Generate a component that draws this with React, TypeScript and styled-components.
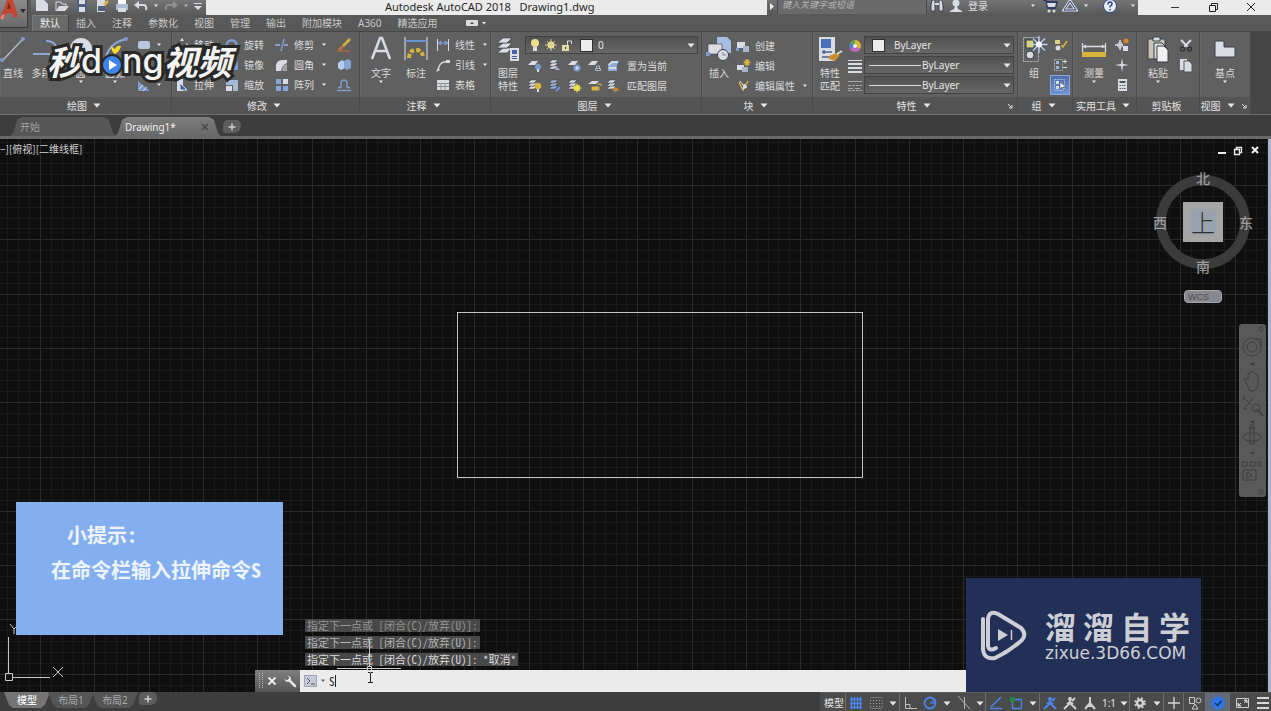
import React from "react";
import styled, { createGlobalStyle, css } from "styled-components";

const UI = `"Noto Sans", "Noto Sans CJK SC", sans-serif`;
const CJK = `"Noto Sans CJK SC", sans-serif`;
const MONO = `"Noto Sans Mono CJK SC", "Liberation Mono", "Noto Sans CJK SC", monospace`;

const GlobalStyle = createGlobalStyle`
  * { box-sizing: border-box; }
  html, body { margin: 0; background: #111; }
  body { font: 10px/14px ${UI}; color: #dcdcdc; }
  button, input, select { font: inherit; color: inherit; margin: 0; padding: 0; border: 0; background: none; outline: none; }
  svg { display: block; flex: none; }
`;

const Page = styled.div`
  display: flex;
  flex-direction: column;
  height: 100vh;
  min-width: 0;
  overflow: hidden;
`;

/* ---------- header ---------- */

const Header = styled.header`
  display: grid;
  grid-template-columns: 31px 1fr;
  grid-template-rows: 15px 16px;
  background: #595959;
  border-bottom: 1px solid #474747;
`;

const AppButton = styled.button`
  grid-row: 1 / 3;
  width: 28px;
  height: 28px;
  display: flex;
  align-items: flex-start;
  background: linear-gradient(#8b8b8b, #6a6a6a);
  border-right: 1px solid #3a3a3a;
  border-bottom: 1px solid #3a3a3a;
`;

const TitleBar = styled.div`
  display: flex;
  align-items: stretch;
  background: linear-gradient(#757575, #585858);
`;

const QuickBar = styled.div`
  display: flex;
  align-items: center;
  width: 175px;
  padding: 0 2px 4px 1px;
`;

const IconButton = styled.button<{ $w?: number }>`
  width: ${(p) => p.$w ?? 20}px;
  height: 14px;
  display: flex;
  flex: none;
  align-items: center;
  justify-content: center;
`;

const Title = styled.div`
  flex: 1;
  padding-left: 179px;
  background: #ebebeb;
  color: #262626;
  font-size: 11px;
  line-height: 13px;
  white-space: pre;
`;

const Search = styled.input`
  width: 150px;
  height: 14px;
  padding: 0 4px 4px;
  background: #6a6a6a;
  border: solid #474747;
  border-width: 0 1px;
  font-size: 9px;
  font-style: italic;
  &::placeholder { color: #b4b4b4; opacity: 1; }
`;

const Account = styled.div`
  display: flex;
  align-items: center;
  width: 211px;
  padding-bottom: 4px;
`;

const LoginButton = styled.button`
  display: flex;
  flex: 1;
  align-items: center;
  gap: 3px;
  height: 14px;
`;

const WindowButtons = styled.div`
  display: flex;
  width: 133px;
  padding: 0 0 4px 18px;
  background: #ebebeb;
  color: #222;
`;

const TabRow = styled.nav`
  display: flex;
  align-items: stretch;
  padding-left: 1px;
`;

const RibbonTab = styled.button<{ $active?: boolean }>`
  padding: 0 8px;
  line-height: 17px;
  color: ${(p) => (p.$active ? "#efefef" : "#c8c8c8")};
  ${(p) => p.$active && css`background: #6a6a6a; box-shadow: inset 1px 1px 0 #7b7b7b, 1px 0 0 #454545;`}
`;

/* ---------- ribbon ---------- */

const Ribbon = styled.section`
  display: flex;
  height: 83px;
  flex: none;
  background: #454545;
  border-bottom: 1px solid #6d6d6d;
`;

const PanelBox = styled.section<{ $w: number }>`
  display: flex;
  flex-direction: column;
  flex: none;
  width: ${(p) => p.$w}px;
  background: #606060;
  border-right: 1px solid #4a4a4a;
  box-shadow: inset 1px 0 0 #686868;
`;

const PanelBody = styled.div<{ $pad?: number }>`
  display: flex;
  flex: 1;
  padding: 3px 0 0 ${(p) => p.$pad ?? 0}px;
`;

const PanelFoot = styled.button`
  display: flex;
  align-items: center;
  justify-content: center;
  gap: 6px;
  height: 17px;
  padding-right: 3px;
  background: #545454;
  color: #e2e2e2;
`;

const Big = styled.button<{ $w: number }>`
  width: ${(p) => p.$w}px;
  height: 62px;
  display: flex;
  flex: none;
  flex-direction: column;
  align-items: center;
  line-height: 13px;
  > svg:first-child { margin-bottom: 4px; }
  > span { white-space: nowrap; }
`;

const Column = styled.div<{ $w?: number; $low?: boolean }>`
  display: flex;
  flex-direction: column;
  flex: none;
  ${(p) => p.$w && css`width: ${p.$w}px;`}
  ${(p) => p.$low && css`padding-top: 1px;`}
`;

const Line = styled.div`
  display: flex;
  align-items: center;
  height: 20px;
`;

const ToolButton = styled.button`
  display: flex;
  align-items: center;
  gap: 4px;
  height: 20px;
  white-space: nowrap;
`;

const SmallTool = styled.button<{ $on?: boolean; $w?: number }>`
  display: flex;
  align-items: center;
  justify-content: center;
  width: ${(p) => p.$w ?? 20}px;
  height: 20px;
  ${(p) => p.$on && css`background: linear-gradient(#4e6ea8, #6f93d6); border: 1px solid #8aa9e0;`}
`;

const Combo = styled.label`
  display: flex;
  align-items: center;
  gap: 5px;
  height: 18px;
  margin-bottom: 2px;
  padding: 0 2px 0 4px;
  background: linear-gradient(#515151, #676767);
  border: 1px solid #434343;
  color: #e4e4e4;
`;

const Select = styled.select<{ $gap?: number }>`
  flex: 1;
  min-width: 0;
  height: 16px;
  padding-left: ${(p) => p.$gap ?? 0}px;
  appearance: none;
  line-height: 16px;
`;

const Swatch = styled.span`
  width: 13px;
  height: 13px;
  margin-left: 3px;
  background: #ececec;
  border: 1px solid #2e2e2e;
`;

const Stroke = styled.span<{ $w: number }>`
  width: ${(p) => p.$w}px;
  height: 1px;
  margin-right: -4px;
  background: #dedede;
`;

/* ---------- document tabs ---------- */

const DocTabs = styled.nav`
  display: flex;
  align-items: flex-end;
  flex: none;
  height: 24px;
  padding: 0 0 0 10px;
  background: #3d3d3d;
  border-bottom: 3px solid #686868;
`;

const DocTab = styled.button<{ $active?: boolean }>`
  display: flex;
  align-items: center;
  justify-content: space-between;
  width: 106px;
  height: 19px;
  margin-right: -1px;
  padding: 0 12px 0 10px;
  background: ${(p) => (p.$active ? "linear-gradient(#7c7c7c, #686868)" : "#565656")};
  color: ${(p) => (p.$active ? "#f0f0f0" : "#a2a2a2")};
  clip-path: polygon(0 100%, 3px 85%, 7px 15%, 12px 0, calc(100% - 12px) 0, calc(100% - 7px) 15%, calc(100% - 3px) 85%, 100% 100%);
`;

const AddTab = styled.button`
  display: flex;
  align-items: center;
  justify-content: center;
  width: 18px;
  height: 13px;
  margin: 0 0 3px 3px;
  border-radius: 5px 5px 7px 3px;
  background: #5d5d5d;
`;

/* ---------- drawing area ---------- */

const Canvas = styled.main`
  position: relative;
  flex: 1;
  min-height: 0;
  overflow: hidden;
  background: #0f0f10;
  border-right: 3px solid #aab2d0;
`;

const Sheet = styled.svg`
  position: absolute;
  inset: 0;
  width: 100%;
  height: 100%;
  pointer-events: none;
`;

const ViewLabel = styled.div`
  position: absolute;
  left: 0;
  top: 3px;
  font-family: ${CJK};
  color: #d2d2d2;
`;

const ViewButtons = styled.div`
  position: absolute;
  right: 4px;
  top: 5px;
  display: flex;
`;

const Compass = styled.div`
  position: absolute;
  right: 11px;
  top: 29px;
  width: 108px;
  height: 108px;
  display: grid;
  grid-template: 20px 68px 20px / 22px 64px 22px;
  place-items: center;
  font: 500 14px/20px ${CJK};
  color: #9b9b9b;
`;

const Ring = styled.div`
  position: absolute;
  left: 7px;
  top: 7px;
  width: 94px;
  height: 94px;
  border: 10px solid #3b3b3b;
  border-radius: 50%;
`;

const Face = styled.span<{ $area: string }>`
  position: relative;
  grid-area: ${(p) => p.$area};
`;

const Cube = styled.button`
  grid-area: 2 / 2;
  width: 40px;
  height: 40px;
  border: 7px solid #a5a5a3;
  background: #9aa2ad;
  color: #303030;
  font: 300 24px/24px ${CJK};
`;

const Wcs = styled.button`
  position: absolute;
  right: 46px;
  top: 151px;
  width: 38px;
  height: 13px;
  padding-left: 3px;
  border-radius: 4px;
  border: 1px solid #a9aab0;
  background: #88898f;
  color: #4c4d54;
  font: 9px/10px "Liberation Sans", sans-serif;
  text-align: left;
`;

const NavBar = styled.div`
  position: absolute;
  right: 2px;
  top: 185px;
  width: 27px;
  height: 173px;
  border-radius: 3px;
  background: #595959;
`;

const Tip = styled.aside`
  position: absolute;
  left: 16px;
  bottom: 57px;
  width: 267px;
  height: 133px;
  padding: 15px 0 0 35px;
  background: #83aff0;
  color: #eef4fd;
  font: 700 20px/35px ${MONO};
  p { margin: 0; }
  p:first-child { padding-left: 16px; }
`;

const History = styled.ol`
  position: absolute;
  left: 305px;
  bottom: 26px;
  margin: 0;
  padding: 0;
  list-style: none;
  display: flex;
  flex-direction: column;
  align-items: flex-start;
  gap: 4px;
  font: 11px/13px ${MONO};
  white-space: pre;
`;

const HistoryItem = styled.li<{ $tone: string }>`
  height: 13px;
  padding: 0 2px;
  background: #484848;
  color: ${(p) => p.$tone};
`;

const CommandBar = styled.div`
  position: absolute;
  left: 255px;
  right: 71px;
  bottom: 0;
  display: flex;
  height: 22px;
  background: #ebebeb;
`;

const CommandGrip = styled.div`
  display: flex;
  align-items: center;
  width: 45px;
  padding-left: 3px;
  background: linear-gradient(#7f7f7f, #555);
`;

const Prompt = styled.label`
  display: flex;
  align-items: center;
  gap: 3px;
  padding-left: 4px;
  color: #222;
  font: 11px/16px ${MONO};
`;

const CommandInput = styled.input`
  width: 6px;
`;

const Caret = styled.span`
  width: 1px;
  height: 12px;
  margin-left: -3px;
  background: #222;
`;

const Brand = styled.aside`
  position: absolute;
  right: 67px;
  bottom: 0;
  width: 235px;
  height: 114px;
  display: flex;
  align-items: center;
  gap: 17px;
  padding: 2px 0 0 14px;
  background: #222f57;
  color: #cdcfd4;
`;

const BrandName = styled.div`
  display: flex;
  gap: 7px;
  font: 700 31px/34px ${CJK};
`;

const BrandUrl = styled.div`
  font: 17px/20px "DejaVu Sans", sans-serif;
`;

const VideoMark = styled.div`
  position: absolute;
  left: 47px;
  top: 36px;
  z-index: 2;
  display: flex;
  align-items: center;
  height: 50px;
  color: #f4f4f4;
  -webkit-text-stroke: 6px #282828;
  paint-order: stroke fill;
`;

const MarkCjk = styled.span`
  font: italic 700 34px/50px ${CJK};
`;

const MarkLatin = styled.span`
  font: 500 34px/50px Inter, sans-serif;
`;

/* ---------- status bar ---------- */

const StatusBar = styled.footer`
  display: flex;
  flex: none;
  height: 19px;
  padding-left: 4px;
  background: #3e3e3e;
`;

const LayoutTab = styled.button<{ $active?: boolean }>`
  height: 16px;
  width: 46px;
  margin-right: -2px;
  line-height: 16px;
  color: ${(p) => (p.$active ? "#f2f2f2" : "#a9a9a9")};
  font-weight: ${(p) => (p.$active ? 500 : 400)};
  background: ${(p) => (p.$active ? "#757575" : "#555")};
  clip-path: polygon(0 0, 100% 0, calc(100% - 5px) 80%, calc(100% - 9px) 100%, 9px 100%, 5px 80%);
`;

const StatusTools = styled.div`
  display: flex;
  margin-left: auto;
  padding-left: 2px;
  background: #4b4b4b;
  border-top: 1px solid #5f5f5f;
`;

const StatusItem = styled.button<{ $w?: number; $on?: boolean; $sep?: boolean }>`
  display: flex;
  align-items: center;
  justify-content: center;
  width: ${(p) => p.$w ?? 20}px;
  padding-top: 2px;
  color: #e6e6e6;
  white-space: nowrap;
  background: ${(p) => (p.$on ? "#5f6a7c" : "transparent")};
  ${(p) => p.$sep && css`box-shadow: inset -1px 0 0 #6e6e6e;`}
`;

/* ---------- drawings ---------- */

type G = { w?: number; h?: number; children: React.ReactNode };
const Svg = ({ w = 16, h = 16, children }: G) => (
  <svg width={w} height={h} viewBox={`0 0 ${w} ${h}`} fill="none" aria-hidden="true">{children}</svg>
);

const Down = ({ small, color = "#e8e8e8" }: { small?: boolean; color?: string }) =>
  small ? (
    <Svg w={6} h={4}><path d="M1 0.500h4L3 3z" fill={color} /></Svg>
  ) : (
    <Svg w={8} h={5}><path d="M0.500 0.500h7L4 4.500z" fill={color} /></Svg>
  );

const L = "#d9dde3";
const B = "#7c9cd0";
const Y = "#dab53c";
const D = "#3a3f48";

const Stack = ({ x = 0, y = 0, c = L }: { x?: number; y?: number; c?: string }) => (
  <g transform={`translate(${x} ${y})`} stroke={D} strokeWidth=".5" fill={c}>
    <path d="M0 10l3-3h6l-3 3z" /><path d="M0 7l3-3h6L6 7z" /><path d="M0 4l3-3h6L6 4z" />
  </g>
);

const LayerIcon = ({ kind }: { kind: number }) => (
  <Svg>
    {kind === 0 && <><path d="M1 7l4-4h6L8 7z" fill={L} /><circle cx="11" cy="9" r="3" fill={B} /><path d="M10 11h2v3h-2z" fill={L} /></>}
    {kind === 1 && <><Stack x={2} y={1} /><path d="M10 9l-2 3h5z" fill="#a7b9d8" /></>}
    {kind === 2 && <><path d="M1 7l4-4h6L8 7z" fill={L} /><circle cx="10" cy="10" r="3.500" fill={B} /><circle cx="10" cy="10" r="1.500" fill={L} /></>}
    {kind === 3 && <><path d="M1 7l4-4h6L8 7z" fill={L} /><path d="M9.500 10V8h3v2M8.500 10.500h5v2h-5z" stroke="#b0b6c0" /></>}
    {kind === 4 && <><path d="M3 6l4-3h7l-2 4v6H3z" fill="#8fa9d3" /><path d="M4 7l3-3h6M4 10h7" stroke="#e8edf6" strokeWidth="1.300" /></>}
    {kind === 5 && <><Stack x={1} y={1} /><circle cx="11" cy="8" r="3.200" fill={Y} /><path d="M10 11h2v3h-2z" fill={L} /></>}
    {kind === 6 && <><Stack x={2} y={1} c="#9db1d4" /><path d="M9 13l4-4" stroke="#6c91d8" strokeWidth="2" /></>}
    {kind === 7 && <><Stack x={1} y={1} /><circle cx="10" cy="10" r="3" fill="#efe04a" /><path d="M10 5.500v9M5.500 10h9M7 7l6 6M13 7l-6 6" stroke="#efe04a" /></>}
    {kind === 8 && <><path d="M1 6l4-3h7L9 6z" fill={L} /><path d="M11 7v-1h3v2M5 9h7v3H5z" stroke={Y} /><path d="M5 9h6v3H5z" fill={Y} /></>}
    {kind === 9 && <><Stack x={2} y={1} /><path d="M7 11l4-2 3 3-4 2z" fill="#c9843c" /></>}
  </Svg>
);

const modify: Record<string, React.ReactNode> = {
  移动: <path d="M8 1l2 3H6zM8 15l2-3H6zM1 8l3-2v4zM15 8l-3-2v4z" fill={L} />,
  拷贝: <><circle cx="6" cy="6" r="3.500" stroke={L} /><circle cx="10" cy="10" r="3.500" stroke={B} strokeWidth="1.500" /></>,
  拉伸: <><path d="M3 2h6v12H3z" fill={L} /><path d="M6 13V6l7 7z" fill="#3f5f9c" stroke="#d7e1f2" /></>,
  旋转: <path d="M3 10a5 5 0 1 1 8 2" stroke={B} strokeWidth="2.500" />,
  镜像: <><path d="M2 13V4l5 9z" fill={L} /><path d="M14 13V4l-5 9z" fill={B} /></>,
  缩放: <><path d="M2 3h12v11H9V8H2z" fill="#a7b9d8" /><path d="M2 9h6v5H2z" fill={L} /></>,
  修剪: <><path d="M1 8h5M10 8h4" stroke="#9fb4dc" strokeWidth="1.500" /><path d="M10 2L7 14" stroke={B} strokeWidth="1.500" /></>,
  圆角: <><path d="M2 14V8q1-5 7-5h4v3q-5 2-6 8z" fill={L} /><path d="M8 14q0-6 5-7v7z" fill="#a2a2a2" /></>,
  阵列: <><path d="M2 2h5v5H2zM2 9h5v5H2zM9 9h5v5H9z" fill="#86a6dc" /><path d="M9 2h5v5H9z" fill={L} /></>,
};

const small: Record<string, React.ReactNode> = {
  线性: <><path d="M2.500 2v12M13.500 2v12" stroke={L} /><path d="M3 6h10M3 6l3-2v4zM13 6l-3-2v4z" stroke={B} fill={B} /></>,
  引线: <><path d="M3 14q1-8 6-9h4" stroke={L} strokeWidth="1.300" /><path d="M11 3h4v3h-4z" fill={L} /><path d="M1 15l2-4 2 2z" fill={L} /></>,
  表格: <><path d="M2 3h12v10H2z" fill={L} /><path d="M2 6.500h12M2 9.500h12M6 6v7M10 6v7" stroke="#8e8e8e" /></>,
  创建: <><path d="M2 4h8v6H2z" fill={L} /><path d="M8 8h6v6H8z" fill="#aab6cc" /><path d="M1 10h3v3H1z" fill={B} /></>,
  编辑: <><path d="M2 7h7v5H2z" fill={L} /><path d="M7 9h6v5H7z" fill="#aab6cc" /><path d="M12 1v7M8.500 4.500h7M10 2l4 5M14 2l-4 5" stroke={Y} strokeWidth="1.300" /></>,
  编辑属性: <><path d="M4 4l4 8 5-9" stroke={Y} strokeWidth="1.500" /><path d="M5 3l3 4M9 6l3 3-4 2z" fill={L} stroke={L} /></>,
};

const GridLines = () => {
  const step = 10.86;
  const minor: string[] = [];
  const major: string[] = [];
  for (let i = -5; i < 260; i++) {
    const x = Math.round(40 + i * step);
    const y = Math.round(46 + i * step);
    (i % 5 === 0 ? major : minor).push(`M${x}.5 0V3000M0 ${y}.5H3000`);
  }
  return (
    <>
      <path d={minor.join("")} stroke="#1b1b1c" />
      <path d={major.join("")} stroke="#2b2b2d" />
    </>
  );
};

/* ---------- parts ---------- */

const Panel = ({ name, w, pad, arrow = true, launcher, children }: {
  name: string; w: number; pad?: number; arrow?: boolean; launcher?: boolean; children: React.ReactNode;
}) => (
  <PanelBox $w={w}>
    <PanelBody $pad={pad}>{children}</PanelBody>
    <PanelFoot>
      <span>{name}</span>
      {arrow && <Down />}
      {launcher && <Svg w={6} h={6}><path d="M1 1l3 3M5 2v3H2" stroke="#e0e0e0" /></Svg>}
    </PanelFoot>
  </PanelBox>
);

const WidePanel = styled.div`
  display: flex;
  ${PanelFoot} { position: relative; }
  ${PanelFoot} svg:last-child { position: absolute; right: 4px; }
`;

const Tool = ({ name, caret }: { name: string; caret?: boolean }) => (
  <ToolButton>
    <Svg>{modify[name] ?? small[name]}</Svg>
    {name}
    {caret && <Svg w={12} h={4}><path d="M4 0.500h4L6 3z" fill="#e8e8e8" /></Svg>}
  </ToolButton>
);

const quick: [string, number, React.ReactNode][] = [
  ["新建", 20, <Svg><path d="M2 2h8l4 4v7H2z" fill={L} /></Svg>],
  ["打开", 20, <Svg><path d="M2 13V4h5l1 2h4v2" stroke={L} /><path d="M2 13l3-5h10l-4 5z" fill={L} /></Svg>],
  ["保存", 20, <Svg><path d="M3 2h10v12H3z" fill="#4f5f80" /><path d="M5 2h6v4H5zM5 9h6v5H5z" fill={L} /></Svg>],
  ["另存为", 20, <Svg><path d="M3 2h8v12H3z" fill={L} /><path d="M4 8h7v5H4z" fill="#4f5f80" /><path d="M9 6l4-4 2 2-4 4z" fill={Y} /></Svg>],
  ["打印", 20, <Svg><path d="M4 1h8v5H4z" fill="#fff" /><path d="M2 6h12v6H2z" fill="#aebbd4" /><path d="M4 10h8v4H4z" fill={L} /></Svg>],
  ["放弃", 18, <Svg><path d="M3 7h8q3 1 2 5" stroke={L} strokeWidth="2" /><path d="M1 7l5-4v8z" fill={L} /></Svg>],
  ["放弃列表", 12, <Down small />],
  ["重做", 18, <Svg><path d="M13 7H5q-3 1-2 5" stroke="#909090" strokeWidth="2" /><path d="M15 7l-5-4v8z" fill="#909090" /></Svg>],
  ["重做列表", 12, <Down small color="#bbb" />],
  ["自定义", 12, <Svg w={8} h={8}><path d="M0 1h8v1H0zM0 4h8L4 8z" fill={L} /></Svg>],
];

const Person = ({ c }: { c: string }) => (
  <Svg><path d="M8 2v6M8 8L2 14M8 8l6 6M5 9q3-3 6 0M10 6l3-3" stroke={c} strokeWidth="2" /><circle cx="8" cy="4" r="2" fill={c} /></Svg>
);

export default function App() {
  return (
    <Page>
      <GlobalStyle />
      <Header>
        <AppButton aria-label="应用程序菜单">
          <Svg w={27} h={24}>
            <path d="M0 18L7 0h6l5 17h-5l-1-4-6 1-2 5z" fill="#c64632" />
            <path d="M7 9l2-7 2 7z" fill="#7a2a20" />
            <path d="M0 18l3-4 2 1-2 5z" fill="#e8806c" />
            <path d="M20 9h6l-3 4z" fill="#2d2d2d" />
          </Svg>
        </AppButton>
        <TitleBar>
          <QuickBar>
            {quick.map(([n, w, icon]) => <IconButton key={n} $w={w} aria-label={n}>{icon}</IconButton>)}
          </QuickBar>
          <Title>{"Autodesk AutoCAD 2018   Drawing1.dwg"}</Title>
          <IconButton $w={10} aria-label="展开搜索"><Svg w={6} h={8}><path d="M1 0l4 3.500L1 7z" fill="#eee" /></Svg></IconButton>
          <Search aria-label="搜索" placeholder="键入关键字或短语" />
          <Account>
            <IconButton aria-label="查找">
              <Svg><path d="M2 13V7l1-5h3v11zM14 13V7l-1-5h-3v11z" fill={L} stroke={D} /><path d="M6 6h4" stroke={L} strokeWidth="2" /></Svg>
            </IconButton>
            <LoginButton>
              <Svg w={18}><circle cx="9" cy="5" r="3.500" fill={L} /><path d="M8 8h2l1 3 4 2v1H3v-1l4-2z" fill={L} /></Svg>登录
            </LoginButton>
            <IconButton $w={2} as="span" />
            <IconButton $w={14} aria-label="登录菜单"><Down small /></IconButton>
            <IconButton $w={20} aria-label="商店"><Svg><path d="M1 2h3l2 8h7l2-6H5" stroke="#313c66" strokeWidth="2" /><path d="M5 5h9l-1 4H6z" fill={L} /><circle cx="7" cy="13" r="1.500" fill={L} /><circle cx="12" cy="13" r="1.500" fill={L} /></Svg></IconButton>
            <IconButton $w={20} aria-label="连接"><Svg><path d="M8 3L2 12h12z" stroke="#d5dbec" strokeWidth="3" /><path d="M8 3L2 12h12z" stroke="#313c66" /></Svg></IconButton>
            <IconButton $w={12} aria-label="连接菜单"><Down small /></IconButton>
            <IconButton $w={36} aria-label="帮助"><Svg><circle cx="8" cy="8" r="6.500" fill="#e9edf8" stroke="#2e4480" /><path d="M6 6.500q0-2.500 2-2.500t2 2q0 1-2 2.500v1M8 11v1.500" stroke="#2e4480" strokeWidth="1.500" /></Svg></IconButton>
            <IconButton $w={10} aria-label="帮助菜单"><Down small /></IconButton>
          </Account>
          <WindowButtons>
            <IconButton $w={38} aria-label="最小化"><Svg w={10} h={10}><path d="M1 5.500h8" stroke="#333" /></Svg></IconButton>
            <IconButton $w={38} aria-label="还原"><Svg w={10} h={10}><path d="M1.500 3.500h6v6h-6zM3.500 3V1.500h6v6H8" stroke="#222" /></Svg></IconButton>
            <IconButton $w={38} aria-label="关闭"><Svg w={10} h={10}><path d="M1 1l8 8M9 1L1 9" stroke="#222" /></Svg></IconButton>
          </WindowButtons>
        </TitleBar>
        <TabRow>
          {["默认", "插入", "注释", "参数化", "视图", "管理", "输出", "附加模块", "A360", "精选应用"].map((t, i) => (
            <RibbonTab key={t} $active={i === 0}>{t}</RibbonTab>
          ))}
          <RibbonTab aria-label="最小化功能区">
            <Svg w={44} h={8}><rect x="12" y="1" width="12" height="6" rx="1" fill="#ddd" /><path d="M16 5h4l-2-2z" fill="#444" /><path d="M28 3h4l-2 2.500z" fill="#eee" /></Svg>
          </RibbonTab>
        </TabRow>
      </Header>

      <Ribbon>
        <Panel name="绘图" w={172}>
          <Big $w={26}><Svg w={26} h={28}><path d="M2 26L24 3" stroke="#b4bac4" strokeWidth="1.500" /><circle cx="2" cy="25" r="2" fill={B} /><circle cx="23" cy="4" r="2" fill={B} /></Svg><span>直线</span></Big>
          <Big $w={41}><Svg w={30} h={28}><path d="M1 19h24M14 6q12 0 11 13" stroke="#8ea8d6" strokeWidth="2" /></Svg><span>多段线</span></Big>
          <Big $w={27}><Svg w={26} h={28}><circle cx="13" cy="14" r="11" fill={L} /></Svg><span>圆</span><Down small /></Big>
          <Big $w={42}><Svg w={26} h={28}><path d="M3 26Q6 8 24 4" stroke="#8ea8d6" strokeWidth="2" /><circle cx="24" cy="4" r="2" fill={B} /></Svg><span>圆弧</span><Down small /></Big>
          <Column>
            <ToolButton aria-label="矩形"><Svg><rect x="2" y="4" width="12" height="8" rx="2" fill="#b9c6e0" /></Svg><Down small /></ToolButton>
            <ToolButton aria-label="椭圆"><Svg><ellipse cx="8" cy="8" rx="6" ry="4" stroke={L} /></Svg><Down small /></ToolButton>
            <ToolButton aria-label="图案填充"><Svg><path d="M2 4v10h12z" fill="#7f9bcc" /><path d="M3 12l4-4M7 14l4-4" stroke={L} /></Svg><Down small /></ToolButton>
          </Column>
        </Panel>

        <Panel name="修改" w={188} pad={2}>
          <Column $w={50}><Tool name="移动" /><Tool name="拷贝" /><Tool name="拉伸" /></Column>
          <Column $w={50}><Tool name="旋转" /><Tool name="镜像" /><Tool name="缩放" /></Column>
          <Column $w={60}><Tool name="修剪" caret /><Tool name="圆角" caret /><Tool name="阵列" caret /></Column>
          <Column>
            <SmallTool aria-label="删除"><Svg><path d="M14 2L7 9" stroke={Y} strokeWidth="2.500" /><path d="M7 9l-4 4" stroke="#c96a3c" strokeWidth="3" /><path d="M1 14h13" stroke="#c96a3c" /></Svg></SmallTool>
            <SmallTool aria-label="分解"><Svg><path d="M2 6l4-3 3 2v6l-4 2-3-2z" fill="#b9cbea" /><path d="M8 4l4-2 3 2v7l-4 2-3-2z" fill="#84a4da" /></Svg></SmallTool>
            <SmallTool aria-label="偏移"><Svg><path d="M1 13.500h14M2 10.500h3V5q3-4 6 0v5.500h3" stroke="#7f9bd0" strokeWidth="1.500" /></Svg></SmallTool>
          </Column>
        </Panel>

        <Panel name="注释" w={131} pad={5}>
          <Big $w={32}><Svg w={24} h={28}><path d="M3 24L11 3h2l8 21M6 16h12" stroke={L} strokeWidth="2.500" /></Svg><span>文字</span><Down small /></Big>
          <Big $w={38}><Svg w={26} h={28}><path d="M2 2v23M24 2v23" stroke="#b4bac4" strokeWidth="1.500" /><path d="M2 6h22" stroke="#6f92d4" strokeWidth="2" /><path d="M6 23q0-8 7-8t7 8" stroke={Y} strokeWidth="4" strokeDasharray="4 2" /></Svg><span>标注</span></Big>
          <Column><Tool name="线性" caret /><Tool name="引线" caret /><Tool name="表格" /></Column>
        </Panel>

        <Panel name="图层" w={211}>
          <Big $w={34}>
            <Svg w={26} h={28}>
              <g fill={L} stroke={D} strokeWidth=".7"><path d="M2 18l6-5h9l-5 5z" /><path d="M2 13l6-5h9l-5 5z" /><path d="M2 8l6-5h9l-5 5z" /></g>
              <path d="M15 13h9v13h-9z" fill={L} /><path d="M17 15h5v4h-5zM17 21h5v1h-5zM17 23h5v1h-5z" fill="#3f62a8" />
            </Svg>
            <span>图层</span><span>特性</span>
          </Big>
          <Column $w={173} $low>
            <Combo>
              <Svg w={10} h={14}><circle cx="5" cy="5" r="4" fill="#eadf8f" /><path d="M3 9h4v4H3z" fill={L} /></Svg>
              <Svg w={12} h={14}><circle cx="6" cy="7" r="3.500" fill="#e9dfa0" /><path d="M6 1v12M0 7h12M2 3l8 8M10 3l-8 8" stroke="#d8cc90" /></Svg>
              <Svg w={10} h={14}><path d="M5.500 7V3h4v3" stroke={L} /><path d="M0 7h7v6H0z" fill="#e4dba4" /><path d="M3 9h1v2H3z" fill="#333" /></Svg>
              <Swatch />
              <Select aria-label="图层" defaultValue="0"><option>0</option></Select>
              <Down />
            </Combo>
            {[["置为当前", 0], ["匹配图层", 5]].map(([t, k]) => (
              <Line key={t}>
                {[0, 1, 2, 3].map((n) => <SmallTool key={n} aria-label={`图层工具 ${n + 1}`}><LayerIcon kind={(k as number) + n} /></SmallTool>)}
                <ToolButton><Svg w={18}><LayerIcon kind={(k as number) + 4} /></Svg>{t}</ToolButton>
              </Line>
            ))}
          </Column>
        </Panel>

        <Panel name="块" w={111} pad={1}>
          <Big $w={32}>
            <Svg w={28} h={28}><path d="M12 2h10l4 4v12H12z" fill="#a9bde2" /><path d="M3 9h14v10H3z" fill={L} stroke={D} strokeWidth=".6" /><circle cx="18" cy="20" r="5.500" fill={L} stroke={D} /><path d="M18 17v3h3" stroke="#888" /><path d="M1 17h4v4H1z" fill={B} /></Svg>
            <span>插入</span>
          </Big>
          <Column $low><Tool name="创建" /><Tool name="编辑" /><Tool name="编辑属性" caret /></Column>
        </Panel>

        <WidePanel>
          <Panel name="特性" w={205} launcher>
            <Big $w={34}>
              <Svg w={26} h={28}><path d="M2 2h16v24H2z" fill={L} /><path d="M4 4h10v9H4z" fill="#4b70b8" /><path d="M5 17h10M5 22h7M7 15v4" stroke="#4b5d85" strokeWidth="1.500" /><path d="M12 21l7-3 4 2-5 6-6-2z" fill="#c98d2c" /><path d="M20 19l5-3" stroke={L} strokeWidth="2" /></Svg>
              <span>特性</span><span>匹配</span>
            </Big>
            <Column $w={17} $low>
              <SmallTool $w={16} aria-label="颜色"><Svg><circle cx="8" cy="8" r="6" fill="#d94f3a" /><path d="M8 8V2a6 6 0 0 1 5.200 9z" fill={Y} /><path d="M8 8l5.200 3A6 6 0 0 1 3 11z" fill="#b76bc9" /><path d="M8 8l-5 3A6 6 0 0 1 3 5z" fill="#4a7fe0" /><path d="M8 8L3 5a6 6 0 0 1 5-3z" fill="#4fb05c" /><circle cx="8" cy="8" r="2" fill="#eee" /></Svg></SmallTool>
              <SmallTool $w={16} aria-label="线宽"><Svg><path d="M1 2.500h14" stroke={L} /><path d="M1 6h14M1 10h14M1 14h14" stroke={L} strokeWidth="2" /></Svg></SmallTool>
              <SmallTool $w={16} aria-label="线型"><Svg><path d="M1 3.500h14" stroke="#aaa" /><path d="M1 7.500h14M1 12.500h14" stroke="#aaa" strokeDasharray="3 1" /><path d="M1 10.500h14" stroke="#aaa" strokeDasharray="5 2" /></Svg></SmallTool>
            </Column>
            <Column $w={150} $low>
              <Combo><Swatch /><Select $gap={4} aria-label="对象颜色" defaultValue="ByLayer"><option>ByLayer</option></Select><Down /></Combo>
              <Combo><Stroke $w={52} /><Select aria-label="对象线宽" defaultValue="ByLayer"><option>ByLayer</option></Select><Down /></Combo>
              <Combo><Stroke $w={52} /><Select aria-label="对象线型" defaultValue="ByLayer"><option>ByLayer</option></Select><Down /></Combo>
            </Column>
          </Panel>
        </WidePanel>

        <Panel name="组" w={55}>
          <Big $w={32}>
            <Svg w={28} h={28}><path d="M3.500 2.500h15v24h-15z" stroke="#b8b8b8" strokeDasharray="2 1" /><path d="M6 5h8v8H6z" fill="#d8d27e" stroke={D} /><circle cx="10" cy="20" r="4" fill={L} stroke={D} /><path d="M19 1v17M10.500 9.500h17M13 3.500l12 12M25 3.500l-12 12" stroke="#b9d4ff" strokeWidth="1.300" /><circle cx="19" cy="9.500" r="3" fill="#fff" /></Svg>
            <span>组</span>
          </Big>
          <Column>
            <SmallTool aria-label="取消编组"><Svg><path d="M3 3h5v4H3z" fill="#d8d27e" /><circle cx="6" cy="11" r="2.500" fill={L} /><path d="M9 8l2 2 4-6" stroke={Y} strokeWidth="1.500" /></Svg></SmallTool>
            <SmallTool aria-label="组编辑"><Svg><path d="M2.500 2.500h8v11h-8z" stroke="#aaa" strokeDasharray="2 1" /><path d="M4 4h3v3H4zM4 9h3v3H4z" fill="#9db4dd" /><path d="M11 4.500h4M13 2.500v4M11 10.500h4" stroke={L} /></Svg></SmallTool>
            <SmallTool $on aria-label="组选择"><Svg w={14}><path d="M1.500 2.500h10v11h-10z" stroke="#a9bde6" strokeDasharray="2 1" /><path d="M3 4h3v3H3zM3 9h3v3H3z" fill={L} /><path d="M7 5v7l2-2 2 4 1-1-2-3h3z" fill="#fff" stroke="#234" strokeWidth=".5" /></Svg></SmallTool>
          </Column>
        </Panel>

        <Panel name="实用工具" w={64} pad={3}>
          <Big $w={36}>
            <Svg w={26} h={28}><path d="M1.500 8v9M24.500 8v9M2 11.500h22" stroke={L} strokeWidth="1.300" /><path d="M2 11.500l3-2v4zM24 11.500l-3-2v4z" fill={L} /><path d="M1 17h24v5H1z" fill={Y} /></Svg>
            <span>测量</span><Down small />
          </Big>
          <Column>
            <SmallTool aria-label="快速选择"><Svg><path d="M1 8h8M6 3v10" stroke={L} strokeWidth="1.500" /><circle cx="6" cy="8" r="2.500" stroke={L} /><circle cx="12" cy="4" r="2.500" fill="#d9822e" /><path d="M9 9h5v5H9z" fill={L} /></Svg></SmallTool>
            <SmallTool aria-label="点坐标"><Svg><path d="M8 1l1 6 6 1-6 1-1 6-1-6-6-1 6-1z" fill={L} /></Svg></SmallTool>
            <SmallTool aria-label="计算器"><Svg><path d="M4 2h9v12H4z" fill={L} /><path d="M5.500 4h6v2h-6zM5.500 8h1.500v1H5.500zM8 8h1.500v1H8zM10 8h1.500v1H10zM5.500 11h1.500v1H5.500zM8 11h1.500v1H8zM10 11h1.500v1H10z" fill="#555" /></Svg></SmallTool>
          </Column>
        </Panel>

        <Panel name="剪贴板" w={63} pad={3} arrow={false}>
          <Big $w={36}>
            <Svg w={26} h={28}><path d="M3 4h17v20H3z" fill="#c9c5b4" stroke={D} /><path d="M8 2h7v4H8z" fill={L} stroke={D} /><path d="M9 8h8l4 4v12H9z" fill={L} stroke={D} /><path d="M12 11h7l4 4v12H12z" fill="#f0f0f0" stroke={D} /></Svg>
            <span>粘贴</span><Down small />
          </Big>
          <Column>
            <SmallTool aria-label="剪切"><Svg><path d="M3 3l7 7M13 3l-7 7" stroke={L} strokeWidth="1.800" /><circle cx="4.500" cy="12" r="2" stroke="#333" strokeWidth="1.500" /><circle cx="11.500" cy="12" r="2" stroke="#333" strokeWidth="1.500" /></Svg></SmallTool>
            <SmallTool aria-label="复制"><Svg><path d="M2 2h7v11H2z" fill={L} /><path d="M6 4h5l3 3v8H6z" fill={L} stroke="#555" /></Svg></SmallTool>
          </Column>
        </Panel>

        <Panel name="视图" w={51} launcher>
          <Big $w={50}>
            <Svg w={26} h={28}><path d="M3 6h9v6h11v10H3z" fill={L} stroke={D} /></Svg>
            <span>基点</span><Down small />
          </Big>
        </Panel>
      </Ribbon>

      <DocTabs>
        <DocTab>开始</DocTab>
        <DocTab $active>Drawing1*<Svg w={8} h={8}><path d="M1 1l6 6M7 1L1 7" stroke="#4a4a4a" strokeWidth="1.500" /></Svg></DocTab>
        <AddTab aria-label="新建图形"><Svg w={8} h={8}><path d="M4 0.500v7M0.500 4h7" stroke="#d0d0d0" strokeWidth="1.500" /></Svg></AddTab>
      </DocTabs>

      <Canvas>
        <Sheet>
          <GridLines />
          <rect x="457.500" y="173.500" width="405" height="165" fill="none" stroke="#c4c4c4" />
          <path
            d="M8.500 498v36M12 538.500h38M5.500 534.500h7v7h-7zM53 528l10 10M63 528l-10 10M10 485l4 5M19 485l-5 5v5"
            stroke="#c8c8c8" fill="none"
          />
        </Sheet>
        <ViewLabel>−][俯视][二维线框]</ViewLabel>
        <ViewButtons>
          <IconButton $w={16} aria-label="最小化视口"><Svg w={10} h={10}><path d="M1 6h8v2H1z" fill="#eee" /></Svg></IconButton>
          <IconButton $w={16} aria-label="还原视口"><Svg w={10} h={10}><path d="M1.500 3.500h5v5h-5zM3.500 3V1.500h5v5H7" stroke="#eee" strokeWidth="1.300" /></Svg></IconButton>
          <IconButton $w={18} aria-label="关闭视口"><Svg w={10} h={10}><path d="M2 1l6 6M8 1L2 7" stroke="#eee" strokeWidth="2" /></Svg></IconButton>
        </ViewButtons>
        <Compass>
          <Ring />
          <Face $area="1 / 2">北</Face>
          <Face $area="2 / 1">西</Face>
          <Cube>上</Cube>
          <Face $area="2 / 3">东</Face>
          <Face $area="3 / 2">南</Face>
        </Compass>
        <Wcs>WCS</Wcs>
        <NavBar>
          <Svg w={27} h={173}>
            <g stroke="#3f3f3f">
              <circle cx="13" cy="23" r="9" /><circle cx="13" cy="23" r="5" /><path d="M15 15h7v8" />
              <path d="M8 60q-4-5-2-6l3 2v-6q1-2 2 0v-2q2-2 3 0v1q2-2 3 1v1q2-1 2 1v8q0 5-4 7h-4z" />
              <path d="M4 73l8 8M15 73l-10 12M5 72v4M16 86h5M4 85h4" /><circle cx="17" cy="84" r="4" /><path d="M20 87l4 5" strokeWidth="2" />
              <path d="M11 104h4v16h-4zM4 113q0-4 9-4t9 4-9 4-9-4M13 100l-3 4h6z" />
              <path d="M4 146h13v10H4zM8 148v6l5-3zM3 138h5v4H3zM11 138h5v4h-5zM19 138h3v4h-3z" />
              <circle cx="22" cy="5" r="2" /><circle cx="22" cy="168" r="2" />
            </g>
            <g fill="#3b3b3b"><path d="M11 39h5l-2.500 3zM11 97h5l-2.500 3zM11 128h5l-2.500 3z" /></g>
          </Svg>
        </NavBar>
        <Tip><p>小提示:</p><p>在命令栏输入拉伸命令S</p></Tip>
        <History>
          <HistoryItem $tone="#959595">指定下一点或 [闭合(C)/放弃(U)]:</HistoryItem>
          <HistoryItem $tone="#b4b4b4">指定下一点或 [闭合(C)/放弃(U)]:</HistoryItem>
          <HistoryItem $tone="#dadada">指定下一点或 [闭合(C)/放弃(U)]: *取消*</HistoryItem>
        </History>
        <CommandBar>
          <CommandGrip>
            <Svg w={6} h={18}><path d="M1.500 1v16M4.500 1v16" stroke="#bbb" strokeDasharray="1 1" /></Svg>
            <IconButton $w={16} aria-label="关闭命令行"><Svg w={10} h={10}><path d="M1.500 1.500l7 7M8.500 1.500l-7 7" stroke="#f0f0f0" strokeWidth="1.800" /></Svg></IconButton>
            <IconButton aria-label="自定义命令行"><Svg w={14} h={14}><path d="M6 6l6 6" stroke="#e4e4e4" strokeWidth="2.500" strokeLinecap="round" /><path d="M4.500 1.500L6 3v2L5 6H3L1.500 4.500q0 3 3.500 3.500Q8 8 8 5T4.500 1.500z" fill="#e4e4e4" /></Svg></IconButton>
          </CommandGrip>
          <Prompt>
            <Svg w={13} h={12}><rect x=".5" y=".5" width="12" height="11" fill="#c6c9d6" stroke="#9fa3b4" /><path d="M3 3l3 3-3 3M7 9h4" stroke="#4d5060" /></Svg>
            <Down small color="#666" />
            <CommandInput aria-label="命令" defaultValue="S" />
            <Caret />
          </Prompt>
        </CommandBar>
        <Brand>
          <Svg w={48} h={52}>
            <path
              d="M3 9v30q1 11 12 9Q30 41 42 30q5-6-1-12L18 4Q9 0 8 9v27q1 6 8 2"
              stroke="#cdcfd4" strokeWidth="4" strokeLinecap="round" strokeLinejoin="round"
            />
            <path d="M18 19l10 6-10 6z" fill="#cdcfd4" /><path d="M31.500 20v10" stroke="#cdcfd4" strokeWidth="1.500" />
          </Svg>
          <div>
            <BrandName><span>溜</span><span>溜</span><span>自</span><span>学</span></BrandName>
            <BrandUrl>zixue.3D66.COM</BrandUrl>
          </div>
        </Brand>
        <Sheet>
          <path d="M369.500 500v28M337 529.500h64M367.500 527.500h4v4h-4z" stroke="#c8c8c8" fill="none" />
          <path d="M368 533.500h2l.5 1 .5-1h2M370.500 534v9M368 543.500h5" stroke="#222" fill="none" />
        </Sheet>
      </Canvas>

      <StatusBar>
        <LayoutTab $active>模型</LayoutTab>
        <LayoutTab>布局1</LayoutTab>
        <LayoutTab>布局2</LayoutTab>
        <AddTab aria-label="新建布局"><Svg w={8} h={8}><path d="M4 0.500v7M0.500 4h7" stroke="#d0d0d0" strokeWidth="1.500" /></Svg></AddTab>
        <StatusTools>
          <StatusItem $w={24} $sep>模型</StatusItem>
          <StatusItem aria-label="栅格"><Svg><path d="M3.500 2v12M6.500 2v12M9.500 2v12M12.500 2v12M2 4.500h12M2 8.500h12M2 12.500h12" stroke="#4a86f0" strokeWidth="1.300" /></Svg></StatusItem>
          <StatusItem aria-label="捕捉"><Svg><path d="M2.500 2v12M5.500 2v12M8.500 2v12M11.500 2v12M14 2v12" stroke="#a6a6a6" strokeDasharray="1 2" /><path d="M2 2.500h12M2 13.500h12" stroke="#777" /></Svg></StatusItem>
          <StatusItem $w={14} $sep aria-label="捕捉菜单"><Down /></StatusItem>
          <StatusItem aria-label="正交"><Svg><path d="M3.500 2v11.500H15M3 9.500h5V14" stroke="#bcbcbc" /></Svg></StatusItem>
          <StatusItem aria-label="极轴"><Svg><circle cx="8" cy="8" r="5.500" stroke="#4a86f0" strokeWidth="1.800" /><path d="M8 8l6-3M8 8h6" stroke="#4a86f0" /></Svg></StatusItem>
          <StatusItem $w={14} aria-label="极轴菜单"><Down /></StatusItem>
          <StatusItem aria-label="等轴测"><Svg><path d="M2 1l12 13M8.500 2v12" stroke="#b5b5b5" /></Svg></StatusItem>
          <StatusItem $w={12} $sep aria-label="等轴测菜单"><Down /></StatusItem>
          <StatusItem aria-label="对象追踪"><Svg><path d="M13 2L3 12M2 13.500h12" stroke="#4a86f0" strokeWidth="1.500" /></Svg></StatusItem>
          <StatusItem aria-label="对象捕捉"><Svg><path d="M4.500 4.500h9v9h-9z" stroke="#4a86f0" strokeWidth="1.300" /><path d="M2 2h5v5H2z" fill="#1d8a3c" /></Svg></StatusItem>
          <StatusItem $w={14} $sep aria-label="捕捉设置"><Down /></StatusItem>
          <StatusItem aria-label="注释可见性"><Person c="#4a86f0" /></StatusItem>
          <StatusItem aria-label="自动缩放"><Person c="#d0d0d0" /></StatusItem>
          <StatusItem aria-label="注释比例"><Svg><path d="M8 2v6M8 8L3 14M8 8l5 6M5 11h6" stroke="#d0d0d0" strokeWidth="2" /></Svg></StatusItem>
          <StatusItem $w={18}>1:1</StatusItem>
          <StatusItem $w={12} $sep aria-label="比例菜单"><Down /></StatusItem>
          <StatusItem aria-label="设置"><Svg><circle cx="8" cy="8" r="3" stroke="#d4d4d4" strokeWidth="2.500" /><circle cx="8" cy="8" r="5" stroke="#d4d4d4" strokeWidth="1.500" strokeDasharray="2 2" /></Svg></StatusItem>
          <StatusItem $w={14} $sep aria-label="工作空间菜单"><Down /></StatusItem>
          <StatusItem $sep aria-label="添加"><Svg><path d="M8 2v12M2 8h12" stroke="#d8d8d8" strokeWidth="1.300" /></Svg></StatusItem>
          <StatusItem $w={22} $sep aria-label="隔离对象"><Svg><path d="M2.500 2.500h5v6h-5z" stroke="#ccc" /><circle cx="11.500" cy="5.500" r="2.500" stroke="#ccc" /><path d="M8 9l-3 5h6z" stroke="#ccc" /></Svg></StatusItem>
          <StatusItem $w={24} $on $sep aria-label="硬件加速"><Svg><circle cx="8" cy="8" r="6.500" fill="#2d74e6" /><path d="M5 8l2.500 2.500L11.500 6" stroke="#16305f" strokeWidth="1.500" /></Svg></StatusItem>
          <StatusItem $w={24} aria-label="全屏显示"><Svg><path d="M2.500 3.500h12v9h-12z" stroke="#d0d0d0" /><path d="M4 11V8l3 3zM13 5v3l-3-3zM5 10l2-2M12 6l-2 2" fill="#d0d0d0" stroke="#d0d0d0" /></Svg></StatusItem>
          <StatusItem $w={17} aria-label="自定义"><Svg w={14}><path d="M1 3h12M1 8h12M1 13h12" stroke="#d8d8d8" strokeWidth="1.800" /></Svg></StatusItem>
        </StatusTools>
      </StatusBar>

      <VideoMark>
        <MarkCjk>秒</MarkCjk>
        <MarkLatin>d</MarkLatin>
        <Svg w={20} h={50}>
          <circle cx="10" cy="29" r="11" fill="#282828" stroke="none" />
          <circle cx="10" cy="29" r="9" fill="#3f83ec" stroke="none" />
          <path d="M7 24v10l8-5z" fill="#fff" stroke="none" />
          <path d="M9 10l4 3q2-4 6-3-1 5-6 8-4-3-4-8z" fill="#f0dc28" stroke="none" />
        </Svg>
        <MarkLatin>ng</MarkLatin>
        <MarkCjk>视频</MarkCjk>
      </VideoMark>
    </Page>
  );
}
